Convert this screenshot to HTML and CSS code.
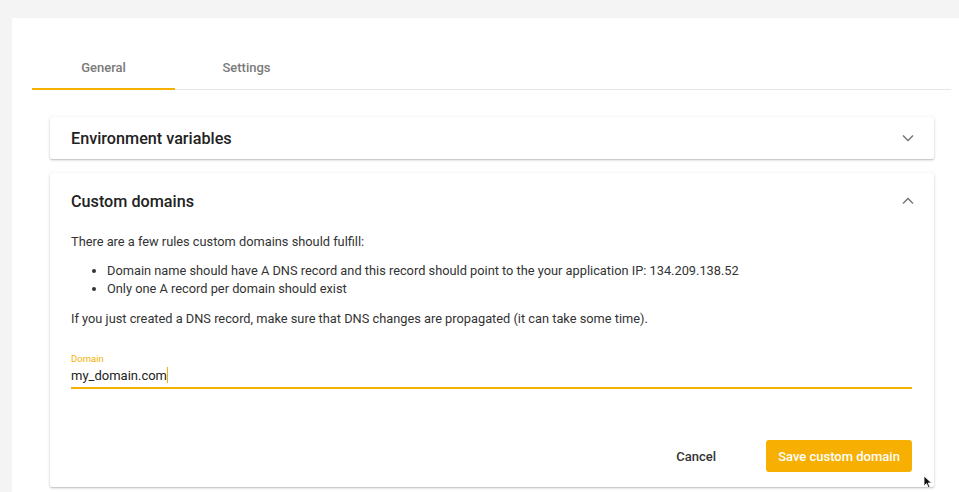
FILE: index.html
```html
<!DOCTYPE html>
<html>
<head>
<meta charset="utf-8">
<link rel="stylesheet" href="styles.css">
</head>
<body>
<div class="page">
  <div class="tabs">
    <div class="tab active">General</div>
    <div class="tab">Settings</div>
  </div>
  <div class="cards">
    <div class="card">
      <div class="card-head">
        <span class="card-title">Environment variables</span>
        <svg class="chev" width="12" height="8" viewBox="0 0 12 8"><path d="M1 1.5 L6 6.5 L11 1.5" fill="none" stroke="#777" stroke-width="1.5"/></svg>
      </div>
    </div>
    <div class="card open">
      <div class="card-head tall">
        <span class="card-title">Custom domains</span>
        <svg class="chev" width="12" height="8" viewBox="0 0 12 8"><path d="M1 6.5 L6 1.5 L11 6.5" fill="none" stroke="#777" stroke-width="1.5"/></svg>
      </div>
      <div class="card-body">
        <p>There are a few rules custom domains should fulfill:</p>
        <ul>
          <li>Domain name should have A DNS record and this record should point to the your application IP: 134.209.138.52</li>
          <li>Only one A record per domain should exist</li>
        </ul>
        <p>If you just created a DNS record, make sure that DNS changes are propagated (it can take some time).</p>
        <div class="field">
          <label class="field-label">Domain</label>
          <div class="field-input">my_domain.com<span class="caret"></span></div>
        </div>
        <div class="actions">
          <button class="btn btn-text">Cancel</button>
          <button class="btn btn-primary">Save custom domain</button>
        </div>
      </div>
    </div>
  </div>
</div>
<svg class="pointer" width="10" height="14" viewBox="0 0 10 14"><path d="M1 1 L1 11 L3.5 8.6 L5.4 12.8 L7 12.1 L5.2 8 L8.6 8 Z" fill="#111" stroke="#fff" stroke-width="0.8"/></svg>
</body>
</html>
```
FILE: styles.css
```css
html, body {
  margin: 0;
  padding: 0;
  background: #f4f4f4;
  font-family: Roboto, "Liberation Sans", sans-serif;
  color: #333;
  height: 100%;
  overflow: hidden;
}
.page {
  margin: 18px 0 0 12px;
  background: #fff;
  padding: 29px 8px 0 20px;
  height: 445px;
  overflow: hidden;
}
.tabs {
  display: flex;
  border-bottom: 1px solid #e6e6e6;
}
.tab {
  width: 143px;
  height: 41px;
  display: flex;
  align-items: center;
  justify-content: center;
  font-size: 13px;
  font-weight: 500;
  color: #7a7a7a;
  border-bottom: 2px solid transparent;
  margin-bottom: -1px;
}
.tab.active {
  border-bottom-color: #f5b100;
}
.cards {
  margin: 27px 17px 0 18px;
  display: flex;
  flex-direction: column;
  gap: 14px;
}
.card {
  background: #fff;
  border-radius: 2px;
  box-shadow: 0 1px 3px rgba(0,0,0,0.22), 0 1px 1px rgba(0,0,0,0.08);
}
.card-head {
  height: 42px;
  display: flex;
  align-items: center;
  justify-content: space-between;
  padding: 0 20px 0 21px;
}
.card-head.tall {
  height: 56px;
}
.card-title {
  font-size: 16.2px;
  font-weight: 500;
  color: #222;
}
.card-body {
  padding: 4px 22px 15px 21px;
  font-size: 12.8px;
  line-height: 18px;
  color: #333;
}
.card-body p {
  margin: 0 0 11px;
}
.card-body ul {
  margin: 0 0 12px;
  padding-left: 36px;
}
.field {
  margin-top: 25px;
}
.field-label {
  display: block;
  font-size: 9.5px;
  line-height: 12px;
  color: #f5b100;
}
.field-input {
  font-size: 13px;
  line-height: 20px;
  padding: 1px 0 1px;
  border-bottom: 2px solid #f5b100;
  color: #222;
}
.caret {
  display: inline-block;
  width: 1px;
  height: 16px;
  background: #f5b100;
  vertical-align: -3px;
}
.actions {
  display: flex;
  justify-content: flex-end;
  align-items: center;
  gap: 34px;
  margin-top: 51px;
}
.btn {
  font-family: Roboto, "Liberation Sans", sans-serif;
  font-size: 13px;
  font-weight: 500;
  border: none;
  border-radius: 3px;
  height: 32px;
  cursor: pointer;
}
.btn-text {
  background: transparent;
  color: #333;
  padding: 0 16px;
}
.btn-primary {
  background: #f7b001;
  color: #fff;
  width: 146px;
}
.pointer {
  position: absolute;
  left: 923px;
  top: 475px;
}
```
